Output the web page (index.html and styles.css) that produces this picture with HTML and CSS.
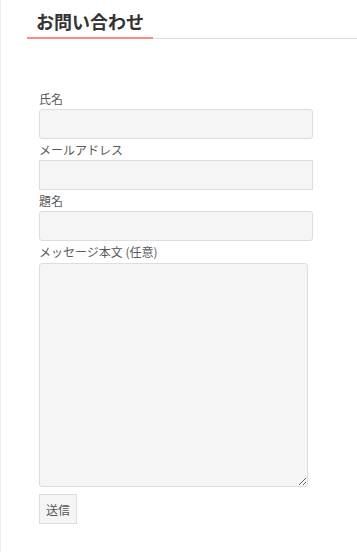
FILE: index.html
```html
<!DOCTYPE html>
<html>
<head>
	<meta charset="UTF-8">
	<title>お問い合わせ</title>
	<link rel="stylesheet" href="styles.css">
</head>
<body>
	<div class="page">
		<h2 class="section-title"><span>お問い合わせ</span></h2>
		<form class="contact-form">
			<label for="name">氏名</label>
			<input type="text" id="name" name="name">
			<label for="email">メールアドレス</label>
			<input type="email" id="email" name="email" class="square">
			<label for="subject">題名</label>
			<input type="text" id="subject" name="subject">
			<label for="message">メッセージ本文 (任意)</label>
			<textarea id="message" name="message"></textarea>
			<button type="submit">送信</button>
		</form>
	</div>
</body>
</html>
```

FILE: styles.css
```css
body {
	font-family: "Noto Sans CJK JP", "Noto Sans", sans-serif;
	margin: 0;
	padding: 0;
	background: #fff;
}
.page {
	min-height: 552px;
	box-sizing: border-box;
	border-left: 1px solid #eee;
	padding-top: 8px;
}
.section-title {
	margin: 0 0 0 26px;
	padding: 0 0 4px 9px;
	font-size: 18px;
	line-height: 26px;
	font-weight: bold;
	color: #333;
	border-bottom: 1px solid #ddd;
	position: relative;
}
.section-title::after {
	content: "";
	position: absolute;
	left: 0;
	bottom: -1px;
	width: 126px;
	height: 2px;
	background: #f88;
}
.contact-form {
	display: flex;
	flex-direction: column;
	align-items: flex-start;
	padding: 49px 0 0 38px;
}
.contact-form label {
	font-size: 12px;
	line-height: 21px;
	color: #5a5a5a;
}
.contact-form input,
.contact-form textarea {
	box-sizing: border-box;
	width: 274px;
	height: 30px;
	margin: 0;
	border: 1px solid #ddd;
	border-radius: 3px;
	background: #f5f5f5;
	font: inherit;
}
.contact-form input.square {
	border-radius: 0;
}
.contact-form textarea {
	width: 269px;
	height: 224px;
	margin-top: 1px;
}
.contact-form button {
	box-sizing: border-box;
	margin-top: 7px;
	width: 38px;
	height: 30px;
	padding: 0;
	border: 1px solid #ddd;
	border-radius: 0;
	background: #f5f5f5;
	color: #555;
	font-family: inherit;
	font-size: 12px;
}
```
